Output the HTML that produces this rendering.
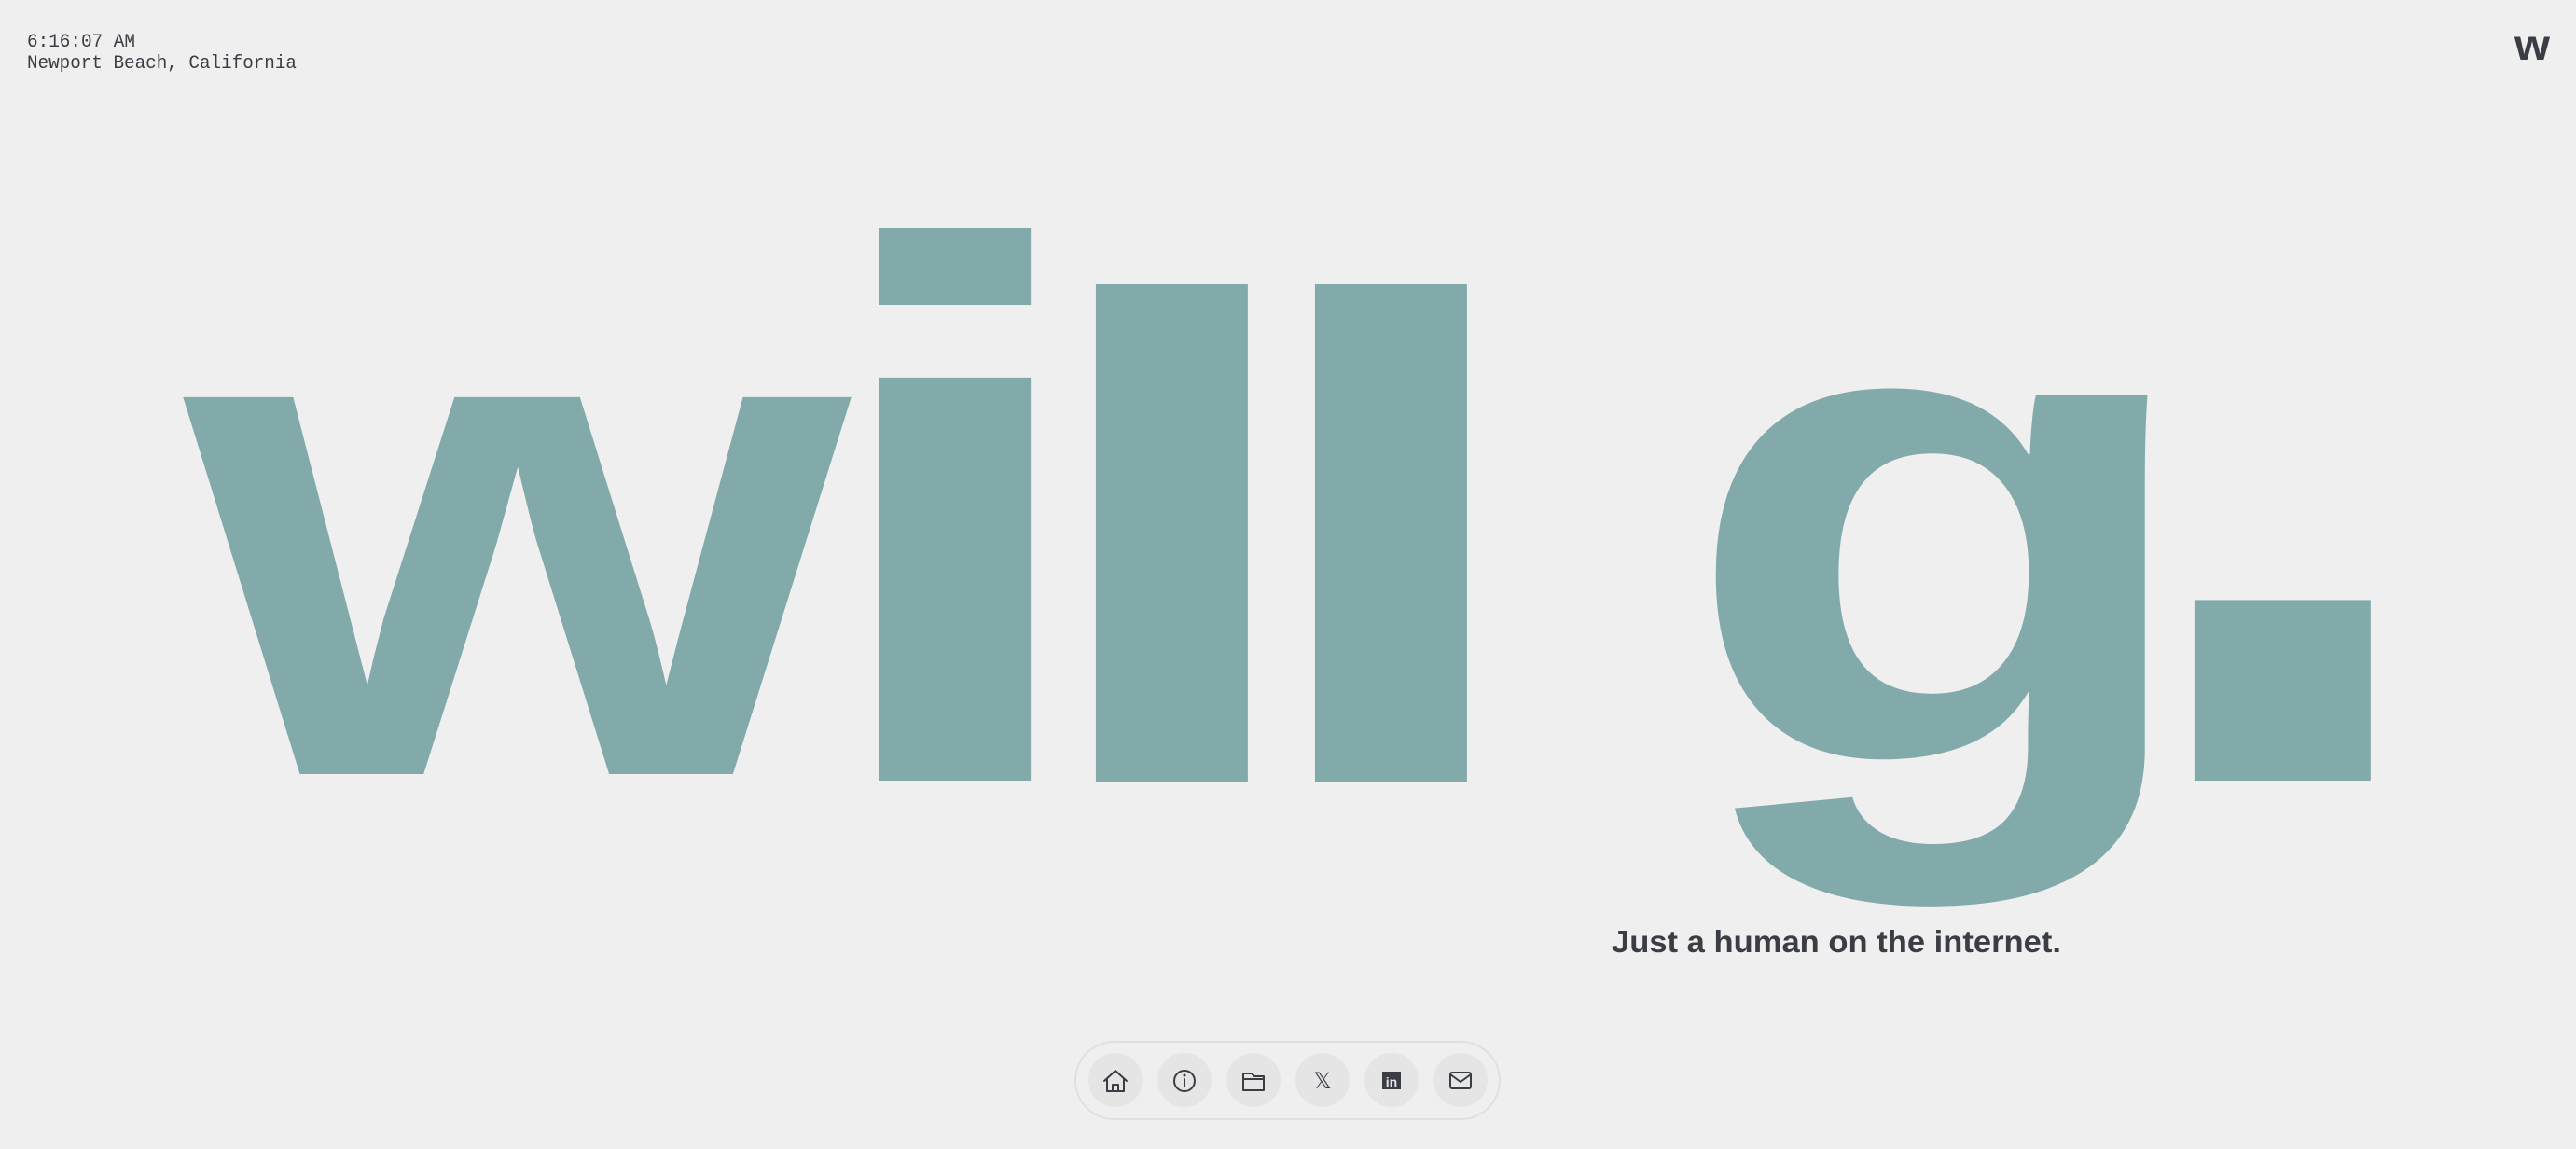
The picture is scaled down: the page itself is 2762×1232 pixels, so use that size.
<!DOCTYPE html>
<html><head><meta charset="utf-8"><style>
html,body{margin:0;padding:0;background:#efefef;width:2762px;height:1232px;overflow:hidden}
svg{display:block}
</style></head><body>
<svg width="2762" height="1232" viewBox="0 0 2762 1232" xmlns="http://www.w3.org/2000/svg">
<rect width="2762" height="1232" fill="#efefef"/>
<g font-family="'Liberation Mono',monospace" font-size="20" fill="#3a3d44">
<text x="29" y="50" textLength="116" lengthAdjust="spacingAndGlyphs">6:16:07 AM</text>
<text x="29" y="73" textLength="289" lengthAdjust="spacingAndGlyphs">Newport Beach, California</text>
</g>
<text x="2696" y="64" font-family="'Liberation Sans',sans-serif" font-weight="900" font-size="46" fill="#3a3d44" textLength="38" lengthAdjust="spacingAndGlyphs">w</text>
<g font-family="'Liberation Sans',sans-serif" font-weight="700" fill="#82aaab">
<text x="199" y="830" font-size="765" textLength="712" lengthAdjust="spacingAndGlyphs">w</text>
<text x="860" y="837" font-size="818" textLength="329" lengthAdjust="spacingAndGlyphs">i</text>
<text x="1092" y="838" font-size="737" textLength="330" lengthAdjust="spacingAndGlyphs">l</text>
<text x="1327" y="838" font-size="737" textLength="330" lengthAdjust="spacingAndGlyphs">l</text>
<text x="1802" y="815" font-size="740" textLength="562" lengthAdjust="spacingAndGlyphs">g</text>
<text x="2262" y="837" font-size="1300" textLength="372" lengthAdjust="spacingAndGlyphs">.</text>
</g>
<text x="1728" y="1021" font-family="'Liberation Sans',sans-serif" font-weight="700" font-size="33" fill="#3a3d44" textLength="482" lengthAdjust="spacingAndGlyphs">Just a human on the internet.</text>
<rect x="1153" y="1117" width="455" height="83" rx="41.5" fill="#efefef" stroke="#e0e0e0" stroke-width="2"/>
<g fill="#e5e5e5">
<circle cx="1196" cy="1158" r="29"/><circle cx="1270" cy="1158" r="29"/><circle cx="1344" cy="1158" r="29"/>
<circle cx="1418" cy="1158" r="29"/><circle cx="1492" cy="1158" r="29"/><circle cx="1566" cy="1158" r="29"/>
</g>
<g fill="none" stroke="#3a3d44" stroke-width="2" stroke-linejoin="round" stroke-linecap="round">
<path d="M1184 1159 L1196 1148 L1208 1159 M1187 1157 V1170 H1205 V1157 M1193 1170 V1163 H1199 V1170"/>
<circle cx="1270" cy="1159" r="11"/>
<path d="M1270 1157 V1165"/>
<path d="M1333 1151 H1342 L1345 1154 H1355 V1169 H1333 Z M1333 1157 H1355"/>
<rect x="1555" y="1150" width="22" height="17" rx="2"/>
<path d="M1555 1152 L1566 1160 L1577 1152"/>
</g>
<circle cx="1270" cy="1153" r="1.5" fill="#3a3d44"/>
<text x="1418" y="1167" text-anchor="middle" font-family="'DejaVu Sans',sans-serif" font-size="24" fill="#3a3d44">𝕏</text>
<rect x="1482" y="1149" width="20" height="19" fill="#3a3d44"/>
<text x="1492" y="1165" text-anchor="middle" font-family="'Liberation Sans',sans-serif" font-weight="700" font-size="14" fill="#e5e5e5">in</text>
</svg>
</body></html>
